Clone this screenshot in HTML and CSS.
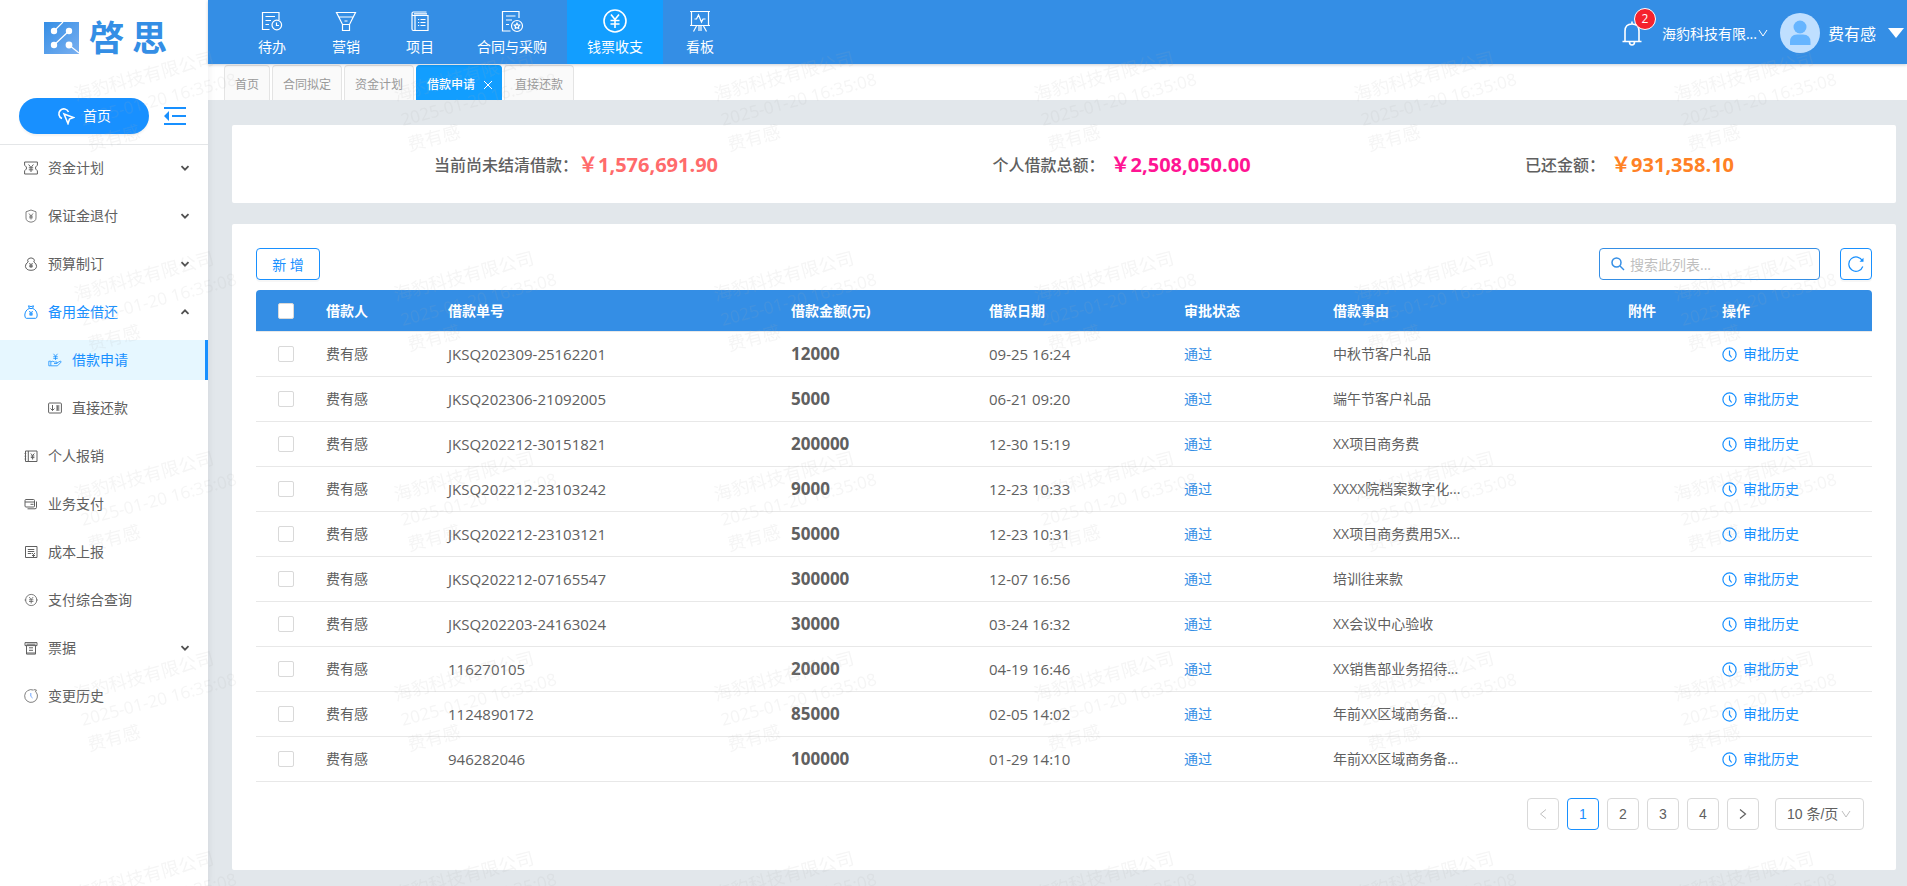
FILE: index.html
```html
<!DOCTYPE html>
<html lang="zh-CN">
<head>
    <meta charset="UTF-8">
    <meta name="viewport" content="width=device-width, initial-scale=1.0">
    <title>借款申请</title>
    <link rel="stylesheet" href="styles.css">
</head>
<body>

    <!-- Shared icons -->
    <svg class="icon-defs" aria-hidden="true">
        <symbol id="i-down" viewBox="0 0 10 10"><path d="M1.5 3.2 5 6.7 8.5 3.2" fill="none" stroke="currentColor" stroke-width="1.8"/></symbol>
        <symbol id="i-up" viewBox="0 0 10 10"><path d="M1.5 6.8 5 3.3 8.5 6.8" fill="none" stroke="currentColor" stroke-width="1.8"/></symbol>
        <symbol id="i-thin-down" viewBox="0 0 10 10"><path d="M1 2 5 8 9 2" fill="none" stroke="currentColor" stroke-width="1"/></symbol>
        <symbol id="i-clock" viewBox="0 0 15 15"><g fill="none" stroke="currentColor" stroke-width="1.2"><circle cx="7.5" cy="7.5" r="6.6"/><path d="M7.5 3.5V7.7L9.6 10.5"/></g></symbol>
    </svg>

    <div class="layout">
        <aside class="sidebar">
            <div class="logo">
                <svg width="35" height="32" viewBox="0 0 35 32">
                    <defs>
                        <linearGradient id="logoFill" x1="0" y1="0" x2="1" y2="1">
                            <stop offset="0" stop-color="#348ee5"/>
                            <stop offset="1" stop-color="#79aff0"/>
                        </linearGradient>
                    </defs>
                    <rect width="35" height="32" fill="url(#logoFill)"/>
                    <g stroke="#fff" stroke-width="1.2">
                        <path d="M10 9 19 0M10 23 25 9M25 23 35 31"/>
                    </g>
                    <g fill="#fff">
                        <circle cx="10" cy="9" r="3.2"/>
                        <circle cx="25" cy="9" r="3.2"/>
                        <circle cx="10" cy="23" r="3.2"/>
                        <circle cx="25" cy="23" r="3.4"/>
                    </g>
                </svg>
                <span>啓</span><span>思</span>
            </div>

            <div class="side-top">
                <a href="#" class="home-btn">
                    <svg width="18" height="18" viewBox="0 0 18 18" fill="none" stroke="#fff" stroke-width="1.6">
                        <path d="M5 11.5A5 5 0 1 1 11.5 5"/>
                        <path d="M7 7 16.5 10.5 12.5 12 11 16.5Z"/>
                    </svg>
                    首页
                </a>
                <button class="collapse-btn" aria-label="收起菜单">
                    <svg width="22" height="18" viewBox="0 0 22 18" fill="#1890ff">
                        <path d="M0 0h22v2H0zM8 8h14v2H8zM0 16h22v2H0zM0 9 5 4v10z"/>
                    </svg>
                </button>
            </div>

            <nav class="menu">
                <a href="#" class="menu-item">
                    <svg class="menu-icon" viewBox="0 0 14 14"><path d="M.6 1h12.8v3.2L11.6 6v2l1.8 1.8V13H.6V9.8L2.4 8V6L.6 4.2z"/><path d="M4.6 3.5 7 6.5 9.4 3.5M7 6.5V11M4.8 6.8h4.4M4.8 8.8h4.4"/></svg>
                    资金计划
                    <svg class="arrow"><use href="#i-down"/></svg>
                </a>
                <a href="#" class="menu-item">
                    <svg class="menu-icon thin" viewBox="0 0 14 14"><path d="M7 1 12 2.8V9Q12 12.5 7 13.2 2 12.5 2 9V2.8zM5 4.500l2 2.500 2-2.500M7 7v3.500M5.200 7.200h3.600M5.200 8.800h3.600"/></svg>
                    保证金退付
                    <svg class="arrow"><use href="#i-down"/></svg>
                </a>
                <a href="#" class="menu-item">
                    <svg class="menu-icon" viewBox="0 0 14 14"><path d="M4.200 5Q2.800 3 4.600 1.600 7 .2 9.400 1.600 11.200 3 9.800 5 12.600 6.600 12.600 9.300 12 13.300 7 13.300 2 13.300 1.400 9.300 1.400 6.600 4.200 5"/><path d="M5.400 6 7 7.800 8.600 6M7 7.800v3.200M5.200 8.200h3.600M5.200 9.700h3.600"/></svg>
                    预算制订
                    <svg class="arrow"><use href="#i-down"/></svg>
                </a>
                <a href="#" class="menu-item open">
                    <svg class="menu-icon" viewBox="0 0 14 14"><path d="M5.400 3.500 4.500 .8 7 1.600 9.500 .8 8.600 3.500zM5.200 3.500C2.500 4.500 1 7 .8 10q0 3.300 1.500 3.300h9.400q1.500 0 1.500-3.300C13 7 11.500 4.500 8.800 3.500"/><path d="M5.300 6 7 7.800 8.700 6M7 7.800v3M5.200 8.200h3.600M5.200 9.800h3.600"/></svg>
                    备用金借还
                    <svg class="arrow"><use href="#i-up"/></svg>
                </a>
                <a href="#" class="menu-item sub active">
                    <svg class="menu-icon thin" viewBox="0 0 14 14"><path d="M5.500 .8 7.500 3.200 9.500 .8M7.500 3.200V7M5.300 3.700h4.400M5.300 5.400h4.400M.8 8.200h2v4.600h-2zM3 8.800Q5 7.500 6.500 9H9v1.500H6M9 10l3.500-2 .7 1L9.500 12.800H3"/></svg>
                    借款申请
                </a>
                <a href="#" class="menu-item sub">
                    <svg class="menu-icon" viewBox="0 0 14 14"><rect x=".6" y="2" width="12.800" height="10" rx="1"/><path d="M4.500 4v5.500M2.500 7.500l2 2 2-2M8 5h3.500M8 7h3.500M8 9h3.500M9.800 4.500v5"/></svg>
                    直接还款
                </a>
                <a href="#" class="menu-item">
                    <svg class="menu-icon" viewBox="0 0 14 14"><path d="M1.500 2h11.500v10.500H1.500zM4.300 2v10.500" /><path d="M.6 4.500h1.600M.6 7.200h1.600M.6 10h1.600M6.800 4.500 8.600 6.500 10.400 4.500M8.600 6.500v4M6.800 7h3.600M6.800 8.600h3.600"/></svg>
                    个人报销
                </a>
                <a href="#" class="menu-item">
                    <svg class="menu-icon" viewBox="0 0 14 14"><rect x="1" y="2.500" width="9.500" height="7.500" rx="1"/><path d="M1 5h9.500M6.500 7.300h3M3.500 11.800h7.500q1.500 0 1.500-1.500V4.500"/></svg>
                    业务支付
                </a>
                <a href="#" class="menu-item">
                    <svg class="menu-icon" viewBox="0 0 14 14"><path d="M1.500 1.500h11.500v11H1.500zM3.800 4.500h6.500M3.800 6.500h6.500M3.800 8.500h3.500M8 8l1.500 1.500L11 8M9.500 9.500V12.500M8 10.500h3"/></svg>
                    成本上报
                </a>
                <a href="#" class="menu-item">
                    <svg class="menu-icon thin" viewBox="0 0 14 14"><circle cx="7.200" cy="7" r="5.600"/><path d="M5.200 4 7.200 6.500 9.200 4M7.200 6.500V10.500M5 6.800h4.400M5 8.500h4.400M.6 7h1.500M12.300 7h1.500"/></svg>
                    支付综合查询
                </a>
                <a href="#" class="menu-item">
                    <svg class="menu-icon" viewBox="0 0 14 14"><path d="M1 1.600h12v3H1zM2.500 4.600v8.500h9V4.600M2.500 3.200h9M5 6.800h4M5 9.300h4M2.500 12h9"/></svg>
                    票据
                    <svg class="arrow"><use href="#i-down"/></svg>
                </a>
                <a href="#" class="menu-item">
                    <svg class="menu-icon thin" viewBox="0 0 14 14"><path d="M12.200 3.200A6.400 6.400 0 1 1 9.500 1.100M9.800 .6 12.400 1 11.300 3.200"/><path d="M6.800 4v3.300L8.600 9" stroke="#4d90fe"/></svg>
                    变更历史
                </a>
            </nav>
        </aside>

        <div class="main">
            <header class="header">
                <nav class="top-nav">
                    <a href="#" class="nav-item">
                        <svg class="nav-icon" viewBox="0 0 24 24"><path d="M9.500 20.500H2.500V3.500H19V11M5.500 7.500H15M5.500 11.500H11M5.500 15.500H9"/><circle cx="16.800" cy="16" r="4.800"/><path d="M16.500 13.500V16.500H19"/></svg>
                        <span>待办</span>
                    </a>
                    <a href="#" class="nav-item">
                        <svg class="nav-icon" viewBox="0 0 24 24"><path d="M2.500 3.500H21.500L15.500 15.500H8.500zM5 8H19M8.500 15.500V21.500H15.500V15.500M10.500 12H13.500"/></svg>
                        <span>营销</span>
                    </a>
                    <a href="#" class="nav-item">
                        <svg class="nav-icon" viewBox="0 0 24 24"><path d="M18.500 3H5.500Q4 3 4 4.500V20Q4 21.500 5.500 21.500H20V6.500H5.500Q4 6.500 4 5M19 4.800H6M7 6.500V21.500M10 10.500H11.200M12.500 10.500H17.500M10 13.500H11.200M12.500 13.500H17.500M10 16.500H11.200M12.500 16.500H17.500"/></svg>
                        <span>项目</span>
                    </a>
                    <a href="#" class="nav-item">
                        <svg class="nav-icon" viewBox="0 0 24 24"><path d="M10.500 22H2.500V2.500H19V9M6 7H15.500M6 11H12M6 15.500H9"/><circle cx="17" cy="17" r="5.500"/><path d="M17 14.200 17.900 15.900 19.700 16.200 18.500 17.600 18.700 19.400 17 18.700 15.300 19.400 15.500 17.600 14.300 16.200 16.100 15.900z"/></svg>
                        <span>合同与采购</span>
                    </a>
                    <a href="#" class="nav-item active">
                        <svg class="nav-icon bold" viewBox="0 0 24 24"><circle cx="12" cy="12" r="11"/><path d="M8 5.500 12 10.500 16 5.500M12 10.500V19M7.500 11.500H16.500M7.500 15H16.500"/></svg>
                        <span>钱票收支</span>
                    </a>
                    <a href="#" class="nav-item">
                        <svg class="nav-icon" viewBox="0 0 24 24"><path d="M2 2.500H22M3.500 2.500V16.500M20.500 2.500V16.500M2 16.500H22M6.500 10H8.500L10.500 6 13.500 13 15 10H17.500M8.500 17 5.500 22.500M15.500 17 18.500 22.500M11 17V22M13 17V22"/></svg>
                        <span>看板</span>
                    </a>
                </nav>

                <div class="user-bar">
                    <button class="bell" aria-label="消息">
                        <svg width="20" height="26" viewBox="0 0 20 26" fill="none" stroke="#fff" stroke-width="1.600">
                            <path d="M3 21V11Q3 4 10 4 17 4 17 11V21M.5 21.500H19.500M10 4V1.500M7.500 22Q7.500 25 10 25 12.500 25 12.500 22"/>
                        </svg>
                        <span class="badge">2</span>
                    </button>
                    <button class="company">海豹科技有限...<svg width="10" height="10"><use href="#i-thin-down"/></svg></button>
                    <button class="user">
                        <svg width="40" height="40" viewBox="0 0 40 40">
                            <circle cx="20" cy="20" r="20" fill="#bfdfff"/>
                            <circle cx="20" cy="14" r="6.500" fill="#66b5ff"/>
                            <path d="M10 32V29Q10 21.500 17 21.500H23Q30.500 21.500 30.500 29V32z" fill="#66b5ff"/>
                        </svg>
                        <span>费有感</span>
                        <svg width="16" height="10" viewBox="0 0 16 10"><path d="M0 0H16L8 10z" fill="#fff"/></svg>
                    </button>
                </div>
            </header>

            <div class="tabs">
                <a href="#" class="tab">首页</a>
                <a href="#" class="tab">合同拟定</a>
                <a href="#" class="tab">资金计划</a>
                <a href="#" class="tab active">借款申请<svg width="10" height="10" viewBox="0 0 10 10"><path d="M1 1 9 9M9 1 1 9" stroke="#fff" stroke-width="1"/></svg></a>
                <a href="#" class="tab">直接还款</a>
            </div>

            <main class="content">
                <section class="card summary">
                    <p>当前尚未结清借款：<strong class="red">￥1,576,691.90</strong></p>
                    <p>个人借款总额：<strong class="pink">￥2,508,050.00</strong></p>
                    <p>已还金额：<strong class="orange">￥931,358.10</strong></p>
                </section>

                <section class="card list">
                    <div class="toolbar">
                        <button class="btn">新 增</button>
                        <div class="tools">
                            <label class="search">
                                <svg width="14" height="14" viewBox="0 0 14 14" fill="none" stroke="#348ee5" stroke-width="1.500"><circle cx="5.500" cy="5.500" r="4.500"/><path d="M9 9 13 13"/></svg>
                                <input type="text" placeholder="搜索此列表..." aria-label="搜索此列表">
                            </label>
                            <button class="btn refresh" aria-label="刷新">
                                <svg width="16" height="16" viewBox="0 0 16 16"><path d="M14.500 5A7.200 7.200 0 1 0 14.800 10.500" fill="none" stroke="#1890ff" stroke-width="1.200"/><path d="M15.500 1.800V5.800H11.500z" fill="#1890ff"/></svg>
                            </button>
                        </div>
                    </div>

                    <table class="data-table">
                        <colgroup>
                            <col class="c-check"><col class="c-user"><col class="c-no"><col class="c-amount"><col class="c-date"><col class="c-status"><col class="c-reason"><col class="c-file"><col class="c-action">
                        </colgroup>
                        <thead>
                            <tr>
                                <th><input type="checkbox" aria-label="全选"></th>
                                <th>借款人</th>
                                <th>借款单号</th>
                                <th>借款金额(元)</th>
                                <th>借款日期</th>
                                <th>审批状态</th>
                                <th>借款事由</th>
                                <th>附件</th>
                                <th>操作</th>
                            </tr>
                        </thead>
                        <tbody>
                            <tr>
                                <td><input type="checkbox" aria-label="选择"></td>
                                <td>费有感</td>
                                <td class="num">JKSQ202309-25162201</td>
                                <td class="amount">12000</td>
                                <td class="num">09-25 16:24</td>
                                <td><a href="#" class="status">通过</a></td>
                                <td>中秋节客户礼品</td>
                                <td></td>
                                <td><a href="#" class="history"><svg><use href="#i-clock"/></svg>审批历史</a></td>
                            </tr>
                            <tr>
                                <td><input type="checkbox" aria-label="选择"></td>
                                <td>费有感</td>
                                <td class="num">JKSQ202306-21092005</td>
                                <td class="amount">5000</td>
                                <td class="num">06-21 09:20</td>
                                <td><a href="#" class="status">通过</a></td>
                                <td>端午节客户礼品</td>
                                <td></td>
                                <td><a href="#" class="history"><svg><use href="#i-clock"/></svg>审批历史</a></td>
                            </tr>
                            <tr>
                                <td><input type="checkbox" aria-label="选择"></td>
                                <td>费有感</td>
                                <td class="num">JKSQ202212-30151821</td>
                                <td class="amount">200000</td>
                                <td class="num">12-30 15:19</td>
                                <td><a href="#" class="status">通过</a></td>
                                <td>XX项目商务费</td>
                                <td></td>
                                <td><a href="#" class="history"><svg><use href="#i-clock"/></svg>审批历史</a></td>
                            </tr>
                            <tr>
                                <td><input type="checkbox" aria-label="选择"></td>
                                <td>费有感</td>
                                <td class="num">JKSQ202212-23103242</td>
                                <td class="amount">9000</td>
                                <td class="num">12-23 10:33</td>
                                <td><a href="#" class="status">通过</a></td>
                                <td>XXXX院档案数字化...</td>
                                <td></td>
                                <td><a href="#" class="history"><svg><use href="#i-clock"/></svg>审批历史</a></td>
                            </tr>
                            <tr>
                                <td><input type="checkbox" aria-label="选择"></td>
                                <td>费有感</td>
                                <td class="num">JKSQ202212-23103121</td>
                                <td class="amount">50000</td>
                                <td class="num">12-23 10:31</td>
                                <td><a href="#" class="status">通过</a></td>
                                <td>XX项目商务费用5X...</td>
                                <td></td>
                                <td><a href="#" class="history"><svg><use href="#i-clock"/></svg>审批历史</a></td>
                            </tr>
                            <tr>
                                <td><input type="checkbox" aria-label="选择"></td>
                                <td>费有感</td>
                                <td class="num">JKSQ202212-07165547</td>
                                <td class="amount">300000</td>
                                <td class="num">12-07 16:56</td>
                                <td><a href="#" class="status">通过</a></td>
                                <td>培训往来款</td>
                                <td></td>
                                <td><a href="#" class="history"><svg><use href="#i-clock"/></svg>审批历史</a></td>
                            </tr>
                            <tr>
                                <td><input type="checkbox" aria-label="选择"></td>
                                <td>费有感</td>
                                <td class="num">JKSQ202203-24163024</td>
                                <td class="amount">30000</td>
                                <td class="num">03-24 16:32</td>
                                <td><a href="#" class="status">通过</a></td>
                                <td>XX会议中心验收</td>
                                <td></td>
                                <td><a href="#" class="history"><svg><use href="#i-clock"/></svg>审批历史</a></td>
                            </tr>
                            <tr>
                                <td><input type="checkbox" aria-label="选择"></td>
                                <td>费有感</td>
                                <td class="num">116270105</td>
                                <td class="amount">20000</td>
                                <td class="num">04-19 16:46</td>
                                <td><a href="#" class="status">通过</a></td>
                                <td>XX销售部业务招待...</td>
                                <td></td>
                                <td><a href="#" class="history"><svg><use href="#i-clock"/></svg>审批历史</a></td>
                            </tr>
                            <tr>
                                <td><input type="checkbox" aria-label="选择"></td>
                                <td>费有感</td>
                                <td class="num">1124890172</td>
                                <td class="amount">85000</td>
                                <td class="num">02-05 14:02</td>
                                <td><a href="#" class="status">通过</a></td>
                                <td>年前XX区域商务备...</td>
                                <td></td>
                                <td><a href="#" class="history"><svg><use href="#i-clock"/></svg>审批历史</a></td>
                            </tr>
                            <tr>
                                <td><input type="checkbox" aria-label="选择"></td>
                                <td>费有感</td>
                                <td class="num">946282046</td>
                                <td class="amount">100000</td>
                                <td class="num">01-29 14:10</td>
                                <td><a href="#" class="status">通过</a></td>
                                <td>年前XX区域商务备...</td>
                                <td></td>
                                <td><a href="#" class="history"><svg><use href="#i-clock"/></svg>审批历史</a></td>
                            </tr>
                        </tbody>
                    </table>

                    <div class="pagination">
                        <button class="page prev" aria-label="上一页" disabled><svg width="8" height="10" viewBox="0 0 8 10"><path d="M7 .5 1.500 5 7 9.500" fill="none" stroke="currentColor"/></svg></button>
                        <button class="page current">1</button>
                        <button class="page">2</button>
                        <button class="page">3</button>
                        <button class="page">4</button>
                        <button class="page" aria-label="下一页"><svg width="8" height="10" viewBox="0 0 8 10"><path d="M1 .5 6.500 5 1 9.500" fill="none" stroke="currentColor" stroke-width="1.200"/></svg></button>
                        <div class="page-size">
                            <select aria-label="每页条数">
                                <option>10 条/页</option>
                                <option>20 条/页</option>
                                <option>50 条/页</option>
                            </select>
                            <svg width="10" height="10"><use href="#i-thin-down"/></svg>
                        </div>
                    </div>
                </section>
            </main>
        </div>
    </div>

    <!-- Watermark -->
    <svg class="watermark" aria-hidden="true">
        <defs>
            <pattern id="mark" width="320" height="200" patternUnits="userSpaceOnUse">
                <g transform="translate(76 101) rotate(-15)">
                    <text>海豹科技有限公司</text>
                    <text class="time" y="26">2025-01-20 16:35:08</text>
                    <text y="52">费有感</text>
                </g>
            </pattern>
        </defs>
        <rect width="100%" height="100%" fill="url(#mark)"/>
    </svg>

</body>
</html>
```

FILE: styles.css
```css
/* General Styles */
* {
    box-sizing: border-box;
}

body {
    margin: 0;
    font-family: "Open Sans", "Noto Sans CJK SC", sans-serif;
    font-size: 14px;
    line-height: 20px;
    color: #606060;
    background: #e2e7eb;
}

a {
    color: inherit;
    text-decoration: none;
}

button, input, select {
    font-family: inherit;
    font-size: 14px;
    color: inherit;
}

button {
    padding: 0;
    border: none;
    background: none;
    cursor: pointer;
}

.icon-defs {
    display: none;
}

.layout {
    display: flex;
    min-height: 100vh;
}

.main {
    flex: 1;
    min-width: 0;
    display: flex;
    flex-direction: column;
}

/* Sidebar */
.sidebar {
    width: 208px;
    flex-shrink: 0;
    background: #fff;
    box-shadow: 0 0 8px rgba(0, 21, 41, 0.08);
    z-index: 1;
}

.logo {
    display: flex;
    align-items: center;
    gap: 8px;
    height: 76px;
    padding-left: 44px;
    color: #348ee5;
    font-size: 35px;
    font-weight: bold;
    line-height: 40px;
}

.logo svg {
    margin-right: 2px;
}

.side-top {
    display: flex;
    align-items: center;
    gap: 15px;
    height: 69px;
    padding: 12px 0 0 19px;
    border-bottom: 1px solid #e4e6e8;
}

.home-btn {
    display: flex;
    align-items: center;
    justify-content: center;
    gap: 8px;
    width: 130px;
    height: 36px;
    margin-bottom: 1px;
    border-radius: 18px;
    background: #1890ff;
    color: #fff;
    box-shadow: 0 2px 2px rgba(0, 0, 0, 0.05);
}

.collapse-btn svg {
    display: block;
}

.menu {
    padding-top: 3px;
}

.menu-item {
    display: flex;
    align-items: center;
    height: 40px;
    margin-bottom: 8px;
    padding: 0 18px 0 24px;
}

.menu-item.open {
    color: #1890ff;
}

.menu-item.sub {
    padding-left: 48px;
}

.menu-item.active {
    color: #1890ff;
    background: #e6f7ff;
    border-right: 3px solid #1890ff;
}

.menu-icon {
    width: 14px;
    height: 14px;
    margin-right: 10px;
    fill: none;
    stroke: currentColor;
    stroke-width: 1;
}

.menu-icon.thin {
    stroke-width: 0.8;
}

.arrow {
    width: 10px;
    height: 10px;
    margin-left: auto;
    color: #505050;
}

/* Header */
.header {
    display: flex;
    justify-content: space-between;
    height: 64px;
    padding-left: 27px;
    background: #348ee5;
    color: #fff;
    box-shadow: 0 1px 3px rgba(0, 21, 41, 0.2);
    z-index: 1;
}

.top-nav {
    display: flex;
}

.nav-item {
    display: flex;
    flex-direction: column;
    align-items: center;
    gap: 4px;
    min-width: 74px;
    padding: 9px 20px 0;
}

.nav-item.active {
    background: #129eff;
}

.nav-icon {
    width: 24px;
    height: 24px;
    fill: none;
    stroke: #fff;
    stroke-width: 1.2;
}

.nav-icon.bold {
    stroke-width: 1.6;
}

.user-bar {
    display: flex;
    align-items: center;
    padding: 2px 3px 0 0;
}

.bell {
    position: relative;
    margin-right: 20px;
}

.bell svg {
    display: block;
}

.badge {
    position: absolute;
    top: -12px;
    right: -14px;
    width: 22px;
    height: 22px;
    border: 1px solid #fff;
    border-radius: 11px;
    background: #f5222d;
    color: #fff;
    font-size: 12px;
    line-height: 20px;
    text-align: center;
}

.company {
    display: flex;
    align-items: center;
    gap: 1px;
    margin-right: 12px;
}

.user {
    display: flex;
    align-items: center;
    font-size: 16px;
}

.user span {
    margin: 0 12px 0 8px;
}

/* Tabs */
.tabs {
    display: flex;
    gap: 2px;
    height: 36px;
    padding: 1px 0 0 16px;
    background: #fff;
}

.tab {
    display: flex;
    align-items: center;
    gap: 8px;
    padding: 3px 10px 0;
    border: 1px solid #e4e4e4;
    border-bottom: none;
    border-radius: 4px 4px 0 0;
    background: #fafafa;
    color: #999;
    font-size: 12px;
}

.tab.active {
    padding: 3px 8px 0 10px;
    border-color: #129eff;
    background: #129eff;
    color: #fff;
    font-weight: 500;
}

/* Content */
.content {
    flex: 1;
    display: flex;
    flex-direction: column;
    gap: 21px;
    padding: 25px 11px 16px 24px;
}

.card {
    background: #fff;
    border-radius: 2px;
}

.summary {
    display: flex;
    align-items: center;
    justify-content: space-between;
    height: 78px;
    padding: 2px 162px 0 202px;
    font-size: 16px;
    font-weight: 500;
}

.summary p {
    display: flex;
    align-items: center;
    margin: 0;
}

.summary strong {
    font-size: 20px;
}

.red {
    color: #ff6b6b;
}

.pink {
    color: #ff1493;
    margin-left: 6px;
}

.orange {
    color: #ff8125;
    margin-left: 6px;
}

.list {
    flex: 1;
    padding: 24px 24px 40px;
}

.toolbar {
    display: flex;
    justify-content: space-between;
    margin-bottom: 10px;
}

.tools {
    display: flex;
    gap: 20px;
}

.btn {
    width: 64px;
    height: 32px;
    border: 1px solid #1890ff;
    border-radius: 4px;
    background: #fff;
    color: #1890ff;
    box-shadow: 0 2px 0 rgba(0, 0, 0, 0.03);
}

.refresh {
    width: 32px;
}

.refresh svg {
    display: block;
    margin: 0 auto;
}

.search {
    display: flex;
    align-items: center;
    gap: 3px;
    width: 221px;
    height: 32px;
    padding: 0 11px;
    border: 1px solid #348ee5;
    border-radius: 4px;
}

.search input {
    flex: 1;
    min-width: 0;
    border: none;
    outline: none;
    background: none;
}

.search input::placeholder {
    color: #bfbfbf;
}

/* Data Table */
.data-table {
    width: 100%;
    table-layout: fixed;
    border-collapse: separate;
    border-spacing: 0;
}

.c-check { width: 62px; }
.c-user { width: 122px; }
.c-no { width: 343px; }
.c-amount { width: 198px; }
.c-date { width: 195px; }
.c-status { width: 149px; }
.c-reason { width: 295px; }
.c-file { width: 94px; }
.c-action { width: 158px; }

.data-table th, .data-table td {
    padding: 0 8px;
    text-align: left;
    border-bottom: 1px solid #e8e8e8;
    white-space: nowrap;
}

.data-table th {
    height: 42px;
    background: #348ee5;
    color: #fff;
    font-weight: bold;
}

.data-table th:first-child {
    border-radius: 4px 0 0 0;
}

.data-table th:last-child {
    border-radius: 0 4px 0 0;
}

.data-table th:first-child, .data-table td:first-child {
    padding-left: 22px;
}

.data-table td {
    height: 45px;
}

.data-table input {
    appearance: none;
    display: block;
    width: 16px;
    height: 16px;
    margin: 0;
    border: 1px solid #d9d9d9;
    border-radius: 2px;
    background: #fff;
}

.data-table .num {
    font-size: 15px;
}

.data-table .amount {
    font-size: 17px;
    font-weight: bold;
}

.status {
    color: #348ee5;
}

.history {
    display: flex;
    align-items: center;
    gap: 6px;
    color: #1890ff;
}

.history svg {
    width: 15px;
    height: 15px;
}

/* Pagination */
.pagination {
    display: flex;
    justify-content: flex-end;
    gap: 8px;
    margin: 16px 8px 0 0;
    font-family: "Liberation Sans", "Noto Sans CJK SC", sans-serif;
}

.page {
    width: 32px;
    height: 32px;
    border: 1px solid #d9d9d9;
    border-radius: 4px;
    background: #fff;
}

.page.current {
    border-color: #1890ff;
    color: #1890ff;
}

.page.prev {
    color: #bfbfbf;
}

.page-size {
    position: relative;
    margin-left: 8px;
}

.page-size select {
    appearance: none;
    width: 89px;
    height: 32px;
    padding: 0 11px;
    border: 1px solid #d9d9d9;
    border-radius: 4px;
    background: #fff;
}

.page-size svg {
    position: absolute;
    top: 11px;
    right: 13px;
    color: #bfbfbf;
    pointer-events: none;
}

/* Watermark */
.watermark {
    position: fixed;
    top: 0;
    left: 0;
    width: 100%;
    height: 100%;
    font-size: 18px;
    fill: rgba(170, 170, 170, 0.12);
    pointer-events: none;
    z-index: 10;
}

.watermark .time {
    font-size: 17px;
}
```
